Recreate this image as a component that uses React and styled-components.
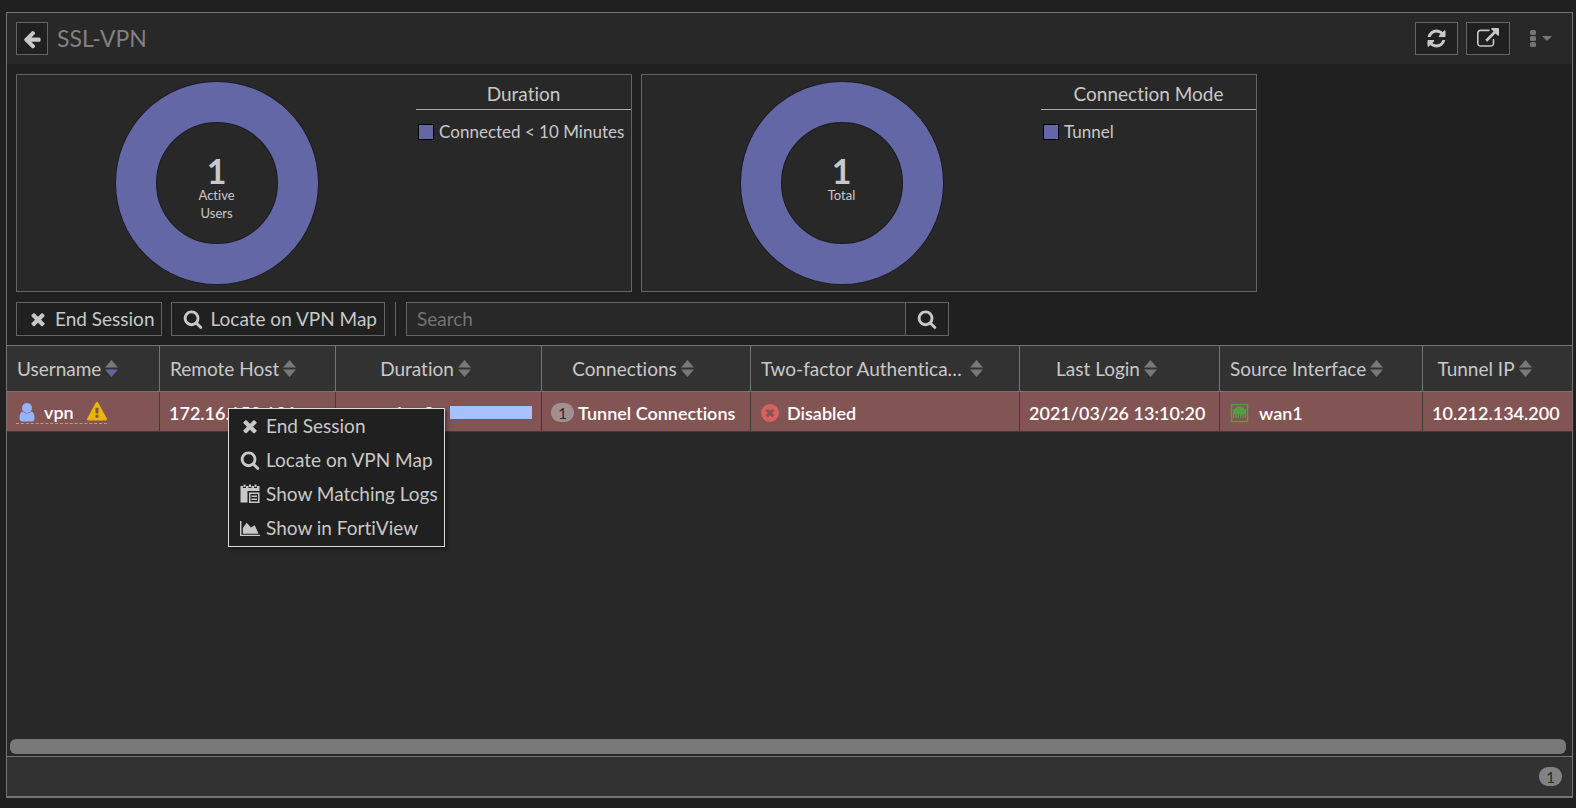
import React, { useState } from 'react';
import styled, { createGlobalStyle } from 'styled-components';

const GlobalStyle = createGlobalStyle`
    *{
        box-sizing:border-box;
    }
    body{
        margin:0;
        background:#202020;
        color:#c8c8c8;
        font-family:Lato, "Open Sans", sans-serif;
        font-size:19px;
        font-variant-ligatures:none;
        line-height:24px;
    }
    button, input{
        font:inherit;
        font-variant-ligatures:none;
        color:inherit;
    }
`;

const Page = styled.main`
    min-height:100vh;
    padding:12px 3px 10px 6px;
    display:flex;
`;
const Panel = styled.section`
    flex:1;
    min-width:0;
    display:flex;
    flex-direction:column;
    border:1px solid #747474;
    border-bottom-width:2px;
`;

const Header = styled.header`
    display:flex;
    align-items:center;
    padding:9px;
    background:#282828;
`;
const Title = styled.h1`
    flex:1;
    margin:0 0 0 9px;
    padding-bottom:2px;
    font-size:23px;
    font-weight:400;
    line-height:30px;
    color:#828282;
`;
const IconButton = styled.button`
    display:flex;
    align-items:center;
    justify-content:center;
    width:${props => props.$width || 44}px;
    height:33px;
    padding:0;
    border:1px solid #646464;
    background:#202020;
`;
const HeaderActions = styled.div`
    display:flex;
    gap:8px;
`;
const MoreButton = styled.button`
    display:flex;
    align-items:center;
    gap:6px;
    padding:0 11px 0 12px;
    border:0;
    background:none;
    color:#747474;
`;

const Charts = styled.div`
    display:flex;
    gap:9px;
    padding:10px 9px;
`;
const ChartCard = styled.section`
    flex:1;
    max-width:616px;
    height:218px;
    display:flex;
    border:1px solid #646464;
    background:#282828;
`;
const Donut = styled.div`
    flex:1;
    display:grid;
    place-items:center;
    > *{
        grid-area:1 / 1;
    }
`;
const DonutLabel = styled.p`
    align-self:start;
    width:60px;
    margin:0;
    padding-top:81px;
    text-align:center;
    font-size:13px;
    line-height:18px;
    strong{
        display:block;
        font-size:34px;
        line-height:30px;
    }
`;
const Legend = styled.div`
    width:35%;
`;
const LegendTitle = styled.h2`
    margin:0;
    padding:7px 0 4px;
    border-bottom:1px solid #aaa;
    font-size:19px;
    font-weight:400;
    line-height:23px;
    text-align:center;
`;
const LegendItem = styled.div`
    display:flex;
    align-items:center;
    gap:5px;
    padding:10px 2px;
    font-size:17px;
    white-space:nowrap;
`;
const Swatch = styled.span`
    width:16px;
    height:16px;
    border:1px solid #000;
    background:#6467a5;
`;

const Toolbar = styled.div`
    display:flex;
    align-items:center;
    gap:9px;
    padding:0 9px 9px;
`;
const ToolButton = styled.button`
    display:flex;
    align-items:center;
    gap:7px;
    height:34px;
    padding:0 7px 0 11px;
    border:1px solid #646464;
    background:#202020;
    white-space:nowrap;
`;
const Divider = styled.span`
    width:1px;
    height:34px;
    margin:0 1px;
    background:#646464;
`;
const SearchBox = styled.form`
    display:flex;
    width:543px;
    height:34px;
    border:1px solid #646464;
    background:#282828;
    input{
        flex:1;
        min-width:0;
        padding:0 10px;
        border:0;
        background:none;
        outline:0;
    }
    input::placeholder{
        color:#747474;
        opacity:1;
    }
    button{
        display:flex;
        align-items:center;
        justify-content:center;
        width:43px;
        padding:0;
        border:0;
        border-left:1px solid #646464;
        background:#202020;
    }
`;

const TableArea = styled.div`
    position:relative;
    flex:1;
    display:flex;
    flex-direction:column;
    justify-content:space-between;
    background:#282828;
    border-top:1px solid #747474;
`;
const Table = styled.table`
    width:100%;
    table-layout:fixed;
    border-collapse:separate;
    border-spacing:0;
`;
const HeadCell = styled.th`
    height:46px;
    padding:0 36px 2px 10px;
    border-bottom:1px solid #747474;
    background:#323232;
    font-weight:400;
    text-align:${props => props.$align || 'left'};
    & + &{
        border-left:1px solid #747474;
    }
    button{
        display:inline-flex;
        align-items:center;
        gap:4px;
        max-width:100%;
        padding:0;
        border:0;
        background:none;
        vertical-align:middle;
    }
    span{
        overflow:hidden;
        text-overflow:ellipsis;
        white-space:nowrap;
    }
    svg{
        flex:none;
    }
`;
const Cell = styled.td`
    height:40px;
    padding:2px 9px 0;
    border-bottom:1px solid #3c3c3c;
    background:#835454;
    color:#fff;
    font-size:18px;
    font-weight:600;
    white-space:nowrap;
    & + &{
        border-left:1px solid #3c3c3c;
    }
`;
const CellContent = styled.div`
    display:flex;
    align-items:center;
    justify-content:${props => props.$end ? 'flex-end' : 'flex-start'};
    gap:${props => props.$gap || 8}px;
`;
const UserName = styled.span`
    display:inline-flex;
    align-items:center;
    gap:9px;
    height:22px;
    padding-left:3px;
    border-bottom:1px dashed #b49a9a;
    svg:last-child{
        margin-left:4px;
    }
`;
const UsageBar = styled.span`
    width:82px;
    height:13px;
    background:#a6c1ff;
`;
const Badge = styled.span`
    display:inline-flex;
    align-items:center;
    justify-content:center;
    width:23px;
    height:19px;
    border-radius:9px;
    background:${props => props.$onRow ? '#a38f8f' : '#828282'};
    color:#282828;
    font-size:15px;
    font-weight:400;
`;

const ContextMenu = styled.ul`
    position:absolute;
    top:62px;
    left:221px;
    margin:0;
    padding:0 0 1px;
    list-style:none;
    border:1px solid #dcdcdc;
    background:#202020;
    box-shadow:2px 2px 4px rgba(0, 0, 0, .4);
    button{
        display:flex;
        align-items:center;
        gap:6px;
        width:100%;
        height:34px;
        padding:0 6px 0 11px;
        border:0;
        background:none;
        white-space:nowrap;
    }
`;
const ScrollTrack = styled.div`
    padding:0 6px 2px 3px;
`;
const ScrollThumb = styled.div`
    height:15px;
    border-radius:6px;
    background:#787878;
`;
const Footer = styled.footer`
    display:flex;
    align-items:center;
    justify-content:flex-end;
    height:40px;
    padding:0 10px;
    border-top:1px solid #747474;
    background:#323232;
`;

const paths = {
    back: 'M1664 896v128q0 53-32.5 90.5t-84.5 37.5h-704l293 294q38 36 38 90t-38 90l-75 76q-37 37-90 37-52 0-91-37l-651-652q-37-37-37-90 0-52 37-91l651-650q38-38 91-38 52 0 90 38l75 74q38 38 38 91t-38 91l-293 293h704q52 0 84.5 37.5t32.5 90.5z',
    refresh: 'M1639 1056q0 5-1 7-64 268-268 434.5t-478 166.5q-146 0-282.5-55t-243.5-157l-129 129q-19 19-45 19t-45-19-19-45v-448q0-26 19-45t45-19h448q26 0 45 19t19 45-19 45l-137 137q71 66 161 102t187 36q134 0 250-65t186-179q11-17 53-117 8-23 30-23h192q13 0 22.5 9.5t9.5 22.5zm25-800v448q0 26-19 45t-45 19h-448q-26 0-45-19t-19-45 19-45l138-138q-148-137-349-137-134 0-250 65t-186 179q-11 17-53 117-8 23-30 23h-199q-13 0-22.5-9.5t-9.5-22.5v-7q65-268 270-434.5t480-166.5q146 0 284 55.5t245 156.5l130-129q19-19 45-19t45 19 19 45z',
    external: 'M1408 928v320q0 119-84.5 203.5t-203.5 84.5h-832q-119 0-203.5-84.5t-84.5-203.5v-832q0-119 84.5-203.5t203.5-84.5h704q14 0 23 9t9 23v64q0 14-9 23t-23 9h-704q-66 0-113 47t-47 113v832q0 66 47 113t113 47h832q66 0 113-47t47-113v-320q0-14 9-23t23-9h64q14 0 23 9t9 23zm384-864v512q0 26-19 45t-45 19-45-19l-176-176-652 652q-10 10-23 10t-23-10l-114-114q-10-10-10-23t10-23l652-652-176-176q-19-19-19-45t19-45 45-19h512q26 0 45 19t19 45z',
    close: 'M1490 1322q0 40-28 68l-136 136q-28 28-68 28t-68-28l-294-294-294 294q-28 28-68 28t-68-28l-136-136q-28-28-28-68t28-68l294-294-294-294q-28-28-28-68t28-68l136-136q28-28 68-28t68 28l294 294 294-294q28-28 68-28t68 28l136 136q28 28 28 68t-28 68l-294 294 294 294q28 28 28 68z',
    search: 'M1216 832q0-185-131.5-316.5t-316.5-131.5-316.5 131.5-131.5 316.5 131.5 316.5 316.5 131.5 316.5-131.5 131.5-316.5zm512 832q0 52-38 90t-90 38q-54 0-90-38l-343-342q-179 124-399 124-143 0-273.5-55.5t-225-150-150-225-55.5-273.5 55.5-273.5 150-225 225-150 273.5-55.5 273.5 55.5 225 150 150 225 55.5 273.5q0 220-124 399l343 343q37 37 37 90z',
    warning: 'M1024 1375v-190q0-14-9.5-23.5t-22.5-9.5h-192q-13 0-22.5 9.5t-9.5 23.5v190q0 14 9.5 23.5t22.5 9.5h192q13 0 22.5-9.5t9.5-23.5zm-2-374l18-459q0-12-10-19-13-11-24-11h-220q-11 0-24 11-10 7-10 21l17 457q0 10 10 16.5t24 6.5h185q14 0 23.5-6.5t10.5-16.5zm-14-934l768 1408q35 63-2 126-17 29-46.5 46t-63.5 17h-1536q-34 0-63.5-17t-46.5-46q-37-63-2-126l768-1408q17-31 47-49t65-18 65 18 47 49z',
};

const Icon = ({ name, size = 20, color = 'currentColor' }) => (
    <svg width={size} height={size} viewBox="0 0 1792 1792" fill={color} aria-hidden="true">
        <path d={paths[name]} />
    </svg>
);
const SortIcon = ({ sorted }) => (
    <svg width="13" height="17" viewBox="0 0 13 17" aria-hidden="true">
        <path d="M6.500 0L13 7.500H0z" fill="#787878" />
        <path d="M0 9.500H13L6.500 17z" fill={sorted ? '#6467a5' : '#787878'} />
    </svg>
);
const UserIcon = () => (
    <svg width="16" height="19" viewBox="0 0 16 19" fill="#94b4ff" aria-hidden="true">
        <circle cx="8" cy="5" r="5" />
        <path d="M3.500 8.500Q8 12.500 12.500 8.500Q15.500 9.500 15.500 15Q15.500 18.500 12.500 18.500H3.500Q0.500 18.500 0.500 15Q0.500 9.500 3.500 8.500z" />
    </svg>
);
const LogsIcon = () => (
    <svg width="20" height="20" viewBox="0 0 20 20" fill="currentColor" aria-hidden="true">
        <path d="M0.500 2H3V4H6V2H8.500V4H11.500V2H14V4H17V2H19.500V7H7.500V18.500H0.500z" />
        <path d="M3.500 0.500h2v2.500h-2zM9 0.500h2v2.500h-2zM14.500 0.500h2v2.500h-2z" />
        <path d="M9 8.500H19.500V19H9zM10.500 10V17.500H18V10z" fillRule="evenodd" />
        <path d="M11.500 11.500h5.500v1.500h-5.500zM11.500 14.500h5.500v1.500h-5.500z" />
    </svg>
);
const AreaIcon = () => (
    <svg width="20" height="17" viewBox="0 0 21 17" fill="currentColor" aria-hidden="true">
        <path d="M0 0.500H1.500V15H21V16.500H0z" />
        <path d="M3 14V8L7 2.500L11.500 7.500L15.500 5L19.500 14z" />
    </svg>
);
const DisabledIcon = () => (
    <svg width="19" height="18" viewBox="0 0 19 18" aria-hidden="true">
        <circle cx="10" cy="9" r="9" fill="#d9635c" />
        <path d="M6.800 5.800L13.200 12.200M13.200 5.800L6.800 12.200" stroke="#835454" strokeWidth="3" />
    </svg>
);
const PortIcon = () => (
    <svg width="20" height="20" viewBox="0 0 20 20" aria-hidden="true">
        <path d="M2.500 1.500H18.500V18.500H2.500z" fill="none" stroke="#549c46" strokeWidth="1.500" />
        <path d="M4 15V6H6V4.500H8V3.500H13V4.500H15V6H17V15H15.800V11H14.800V15H13.400V11H12.400V15H11V11H10V15H8.600V11H7.600V15H6.200V11H5.200V15z" fill="#549c46" />
    </svg>
);
const MoreIcon = () => (
    <svg width="6" height="18" viewBox="0 0 6 18" fill="currentColor" aria-hidden="true">
        <rect y="0" width="6" height="5" rx="1.500" />
        <rect y="6" width="6" height="5" rx="1.500" />
        <rect y="12" width="6" height="5" rx="1.500" />
    </svg>
);
const CaretIcon = () => (
    <svg width="10" height="5" viewBox="0 0 10 5" fill="currentColor" aria-hidden="true">
        <path d="M0 0H10L5 5z" />
    </svg>
);

const columns = [
    { label: 'Username', width: 152, sorted: true },
    { label: 'Remote Host', width: 176 },
    { label: 'Duration', width: 206, align: 'center' },
    { label: 'Connections', width: 209, align: 'center' },
    { label: 'Two-factor Authentication', width: 269 },
    { label: 'Last Login', width: 200, align: 'center' },
    { label: 'Source Interface', width: 203 },
    { label: 'Tunnel IP', width: 150, align: 'center' },
];

const menuItems = [
    { label: 'End Session', icon: <Icon name="close" /> },
    { label: 'Locate on VPN Map', icon: <Icon name="search" /> },
    { label: 'Show Matching Logs', icon: <LogsIcon /> },
    { label: 'Show in FortiView', icon: <AreaIcon /> },
];

const DonutCard = ({ title, caption, item }) => (
    <ChartCard>
        <Donut>
            <svg width="204" height="204" viewBox="0 0 204 204" aria-hidden="true">
                <circle cx="102" cy="102" r="81" fill="none" stroke="#1c1c24" strokeWidth="42" />
                <circle cx="102" cy="102" r="81" fill="none" stroke="#6467a5" strokeWidth="40" />
            </svg>
            <DonutLabel>
                <strong>1</strong>
                {caption}
            </DonutLabel>
        </Donut>
        <Legend>
            <LegendTitle>{title}</LegendTitle>
            <LegendItem>
                <Swatch />
                {item}
            </LegendItem>
        </Legend>
    </ChartCard>
);

const App = () => {
    const [query, setQuery] = useState('');

    return (
        <Page>
            <GlobalStyle />
            <Panel>
                <Header>
                    <IconButton $width={32} aria-label="Back"><Icon name="back" /></IconButton>
                    <Title>SSL-VPN</Title>
                    <HeaderActions>
                        <IconButton $width={43} aria-label="Refresh"><Icon name="refresh" size={21} /></IconButton>
                        <IconButton aria-label="Open in new window"><Icon name="external" size={22} /></IconButton>
                        <MoreButton aria-label="More">
                            <MoreIcon />
                            <CaretIcon />
                        </MoreButton>
                    </HeaderActions>
                </Header>
                <Charts>
                    <DonutCard title="Duration" caption="Active Users" item="Connected < 10 Minutes" />
                    <DonutCard title="Connection Mode" caption="Total" item="Tunnel" />
                </Charts>
                <Toolbar>
                    <ToolButton><Icon name="close" />End Session</ToolButton>
                    <ToolButton><Icon name="search" />Locate on VPN Map</ToolButton>
                    <Divider />
                    <SearchBox onSubmit={e => e.preventDefault()}>
                        <input
                            type="text"
                            aria-label="Search"
                            placeholder="Search"
                            value={query}
                            onChange={e => setQuery(e.target.value)}
                        />
                        <button aria-label="Run search"><Icon name="search" /></button>
                    </SearchBox>
                </Toolbar>
                <TableArea>
                    <Table>
                        <colgroup>
                            {columns.map(col => <col key={col.label} width={col.width} />)}
                        </colgroup>
                        <thead>
                            <tr>
                                {columns.map(col => (
                                    <HeadCell key={col.label} $align={col.align}>
                                        <button>
                                            <span>{col.label}</span>
                                            <SortIcon sorted={col.sorted} />
                                        </button>
                                    </HeadCell>
                                ))}
                            </tr>
                        </thead>
                        <tbody>
                            <tr>
                                <Cell>
                                    <CellContent>
                                        <UserName>
                                            <UserIcon />
                                            vpn
                                            <Icon name="warning" color="#eab600" />
                                        </UserName>
                                    </CellContent>
                                </Cell>
                                <Cell>172.16.152.131</Cell>
                                <Cell>
                                    <CellContent $end>1m 8s<UsageBar /></CellContent>
                                </Cell>
                                <Cell>
                                    <CellContent $gap={4}><Badge $onRow>1</Badge>Tunnel Connections</CellContent>
                                </Cell>
                                <Cell>
                                    <CellContent><DisabledIcon />Disabled</CellContent>
                                </Cell>
                                <Cell>2021/03/26 13:10:20</Cell>
                                <Cell>
                                    <CellContent $gap={10}><PortIcon />wan1</CellContent>
                                </Cell>
                                <Cell>10.212.134.200</Cell>
                            </tr>
                        </tbody>
                    </Table>
                    <ContextMenu>
                        {menuItems.map(item => (
                            <li key={item.label}>
                                <button>{item.icon}{item.label}</button>
                            </li>
                        ))}
                    </ContextMenu>
                    <ScrollTrack>
                        <ScrollThumb />
                    </ScrollTrack>
                </TableArea>
                <Footer>
                    <Badge>1</Badge>
                </Footer>
            </Panel>
        </Page>
    );
};

export default App;
